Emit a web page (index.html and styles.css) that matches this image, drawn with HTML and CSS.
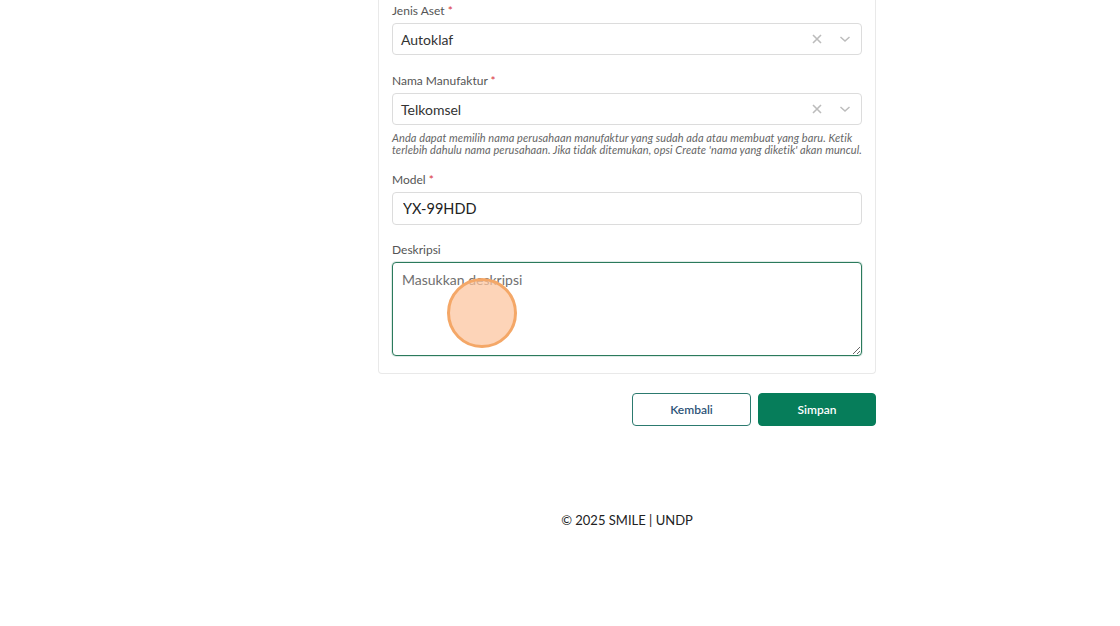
FILE: index.html
```html
<!DOCTYPE html>
<html lang="id">
<head>
<meta charset="utf-8">
<title>Form Aset</title>
<link rel="stylesheet" href="styles.css">
</head>
<body>
<div class="layout">
  <aside class="side"></aside>
  <main class="main">
    <div class="content">
      <section class="card">
        <div class="field first">
          <label class="label">Jenis Aset <span class="req">*</span></label>
          <div class="select">
            <span class="value">Autoklaf</span>
            <span class="clear">
              <svg width="10" height="10" viewBox="0 0 10 10"><path d="M1 1L9 9M9 1L1 9" stroke="#bcbcbc" stroke-width="1.6" fill="none"/></svg>
            </span>
            <span class="chev">
              <svg width="12" height="8" viewBox="0 0 12 8"><path d="M1.5 2L6 6L10.5 2" stroke="#bcbcbc" stroke-width="1.5" fill="none"/></svg>
            </span>
          </div>
        </div>
        <div class="field with-help">
          <label class="label">Nama Manufaktur <span class="req">*</span></label>
          <div class="select">
            <span class="value">Telkomsel</span>
            <span class="clear">
              <svg width="10" height="10" viewBox="0 0 10 10"><path d="M1 1L9 9M9 1L1 9" stroke="#bcbcbc" stroke-width="1.6" fill="none"/></svg>
            </span>
            <span class="chev">
              <svg width="12" height="8" viewBox="0 0 12 8"><path d="M1.5 2L6 6L10.5 2" stroke="#bcbcbc" stroke-width="1.5" fill="none"/></svg>
            </span>
          </div>
          <p class="help">Anda dapat memilih nama perusahaan manufaktur yang sudah ada atau membuat yang baru. Ketik<br>terlebih dahulu nama perusahaan. Jika tidak ditemukan, opsi Create 'nama yang diketik' akan muncul.</p>
        </div>
        <div class="field">
          <label class="label">Model <span class="req">*</span></label>
          <input class="input" type="text" value="YX-99HDD">
        </div>
        <div class="field last">
          <label class="label">Deskripsi</label>
          <div class="ta-wrap">
            <textarea class="textarea" placeholder="Masukkan deskripsi"></textarea>
            <span class="click-dot"></span>
          </div>
        </div>
      </section>
      <div class="actions">
        <button class="btn btn-outline" type="button">Kembali</button>
        <button class="btn btn-primary" type="button">Simpan</button>
      </div>
    </div>
    <footer class="footer">© 2025 SMILE | UNDP</footer>
  </main>
</div>
</body>
</html>
```
FILE: styles.css
```css
* { box-sizing: border-box; }
html, body { margin: 0; padding: 0; background: #fff; }
body {
  font-family: Lato, "Open Sans", "Liberation Sans", sans-serif;
  color: #333;
  width: 1120px;
  height: 626px;
  overflow: hidden;
}
.layout { display: flex; }
.side { width: 134px; flex: none; }
.main { flex: 1; display: flex; flex-direction: column; align-items: center; }
.content { width: 498px; }
.card {
  border: 1px solid #e9e9e9;
  border-top: none;
  border-radius: 0 0 4px 4px;
  padding: 2px 13px 17px 13px;
}
.field { margin-bottom: 16px; }
.field.first { margin-bottom: 17px; }
.field.with-help { margin-bottom: 15px; }
.field.last { margin-bottom: 0; }
.label {
  display: block;
  font-size: 12px;
  line-height: 18px;
  color: #555;
  margin-bottom: 3px;
}
.req { color: #d9343b; }
.select {
  height: 32px;
  border: 1px solid #dcdcdc;
  border-radius: 4px;
  display: flex;
  align-items: center;
  padding-left: 8px;
}
.value { flex: 1; font-size: 14px; color: #333; }
.clear { width: 20px; display: flex; justify-content: center; margin-right: 8px; }
.chev { width: 20px; display: flex; justify-content: center; margin-right: 6px; }
.help {
  margin: 7px 0 0 0;
  font-size: 11px;
  line-height: 12px;
  letter-spacing: 0.09px;
  font-style: italic;
  color: #666;
  white-space: nowrap;
}
.input {
  display: block;
  width: 100%;
  height: 33px;
  border: 1px solid #dcdcdc;
  border-radius: 4px;
  padding: 0 10px;
  font-family: inherit;
  font-size: 14.5px;
  color: #222;
  outline: none;
}
.ta-wrap { position: relative; }
.textarea {
  display: block;
  width: 100%;
  height: 94px;
  border: 1.5px solid #2b7a5c;
  border-radius: 4px;
  padding: 8px 9px;
  font-family: inherit;
  font-size: 14px;
  color: #333;
  resize: vertical;
  outline: none;
  box-shadow: 0 0 0 1px rgba(43, 122, 92, 0.15);
}
.textarea::placeholder { color: #707070; }
.click-dot {
  position: absolute;
  left: 55px;
  top: 16px;
  width: 70px;
  height: 70px;
  border-radius: 50%;
  background: rgba(252, 196, 156, 0.72);
  border: 3px solid #f4a767;
}
.actions {
  display: flex;
  justify-content: flex-end;
  gap: 7px;
  margin-top: 19px;
}
.btn {
  height: 33px;
  border-radius: 4px;
  font-family: inherit;
  font-size: 12px;
  font-weight: 600;
  cursor: pointer;
}
.btn-outline {
  width: 119px;
  background: #fff;
  border: 1px solid #2c7a6f;
  color: #2d5478;
}
.btn-primary {
  width: 118px;
  background: #067d5a;
  border: 1px solid #067d5a;
  color: #fff;
}
.footer {
  margin-top: 86px;
  font-size: 13px;
  color: #222;
  line-height: 16px;
}
```
